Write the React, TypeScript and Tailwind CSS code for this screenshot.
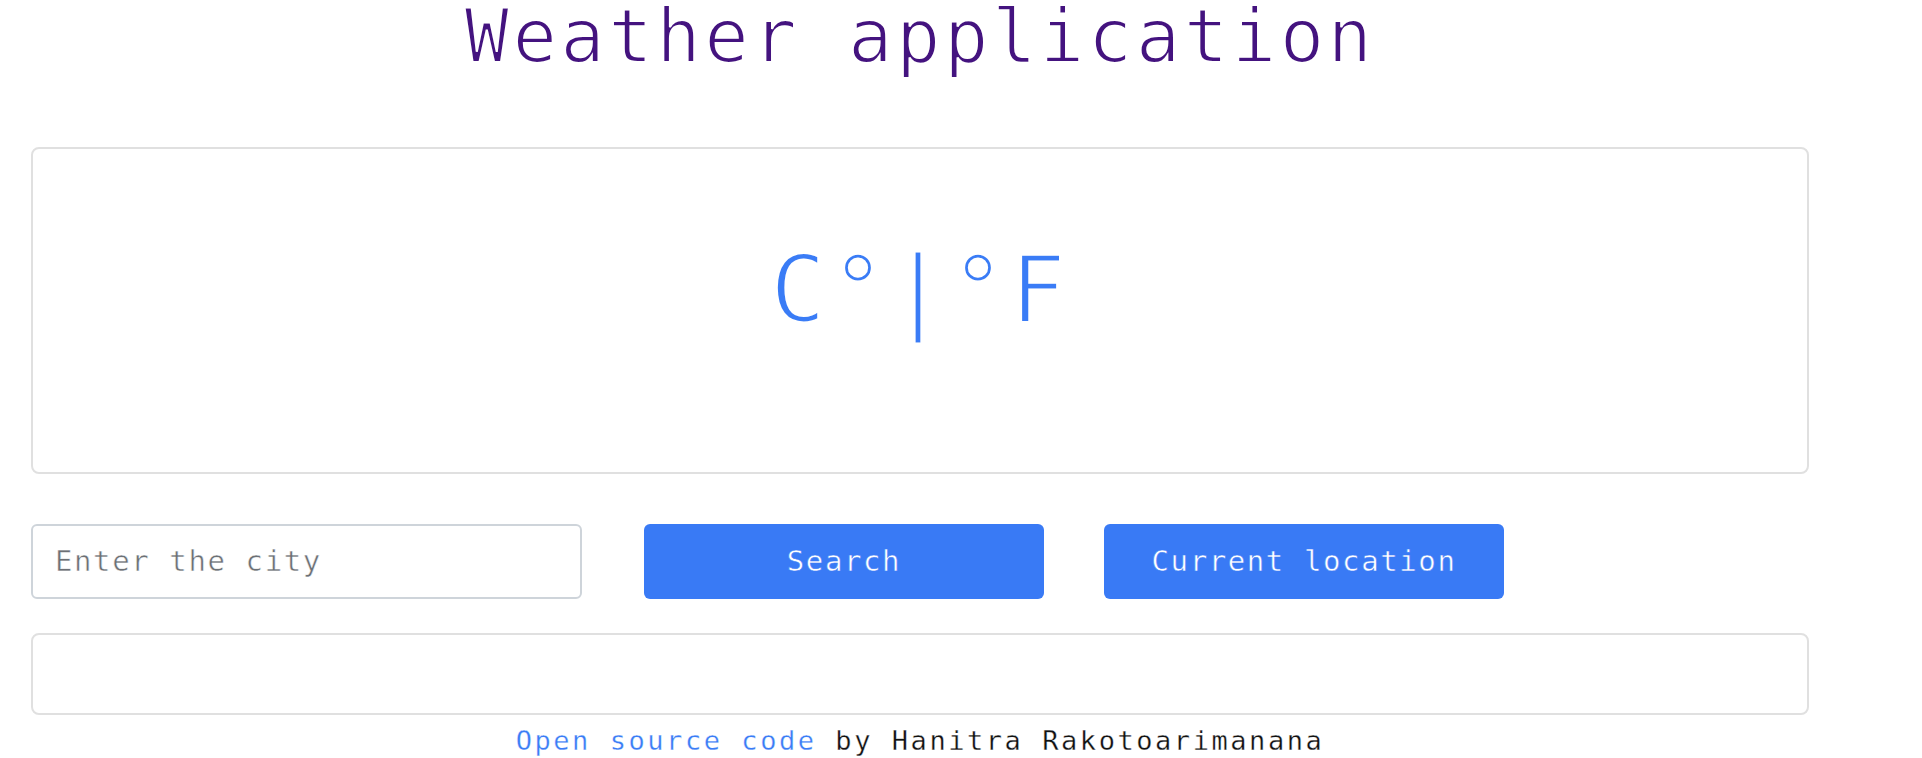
import React from "react";

const mono = "font-['DejaVu_Sans_Mono','Liberation_Mono',monospace]";

export default function App() {
  return (
    <div className={`min-h-[758px] w-[1922px] bg-white ${mono}`}>
      <div className="ml-[31px] w-[1778px]">
        <h1 className="text-center text-[74px] leading-[72px] tracking-[3.4px] text-[#44137f] font-normal [-webkit-text-stroke:2px_white]">
          Weather application
        </h1>

        <div className="mt-[75px] h-[327px] rounded-[8px] border-2 border-[#e0e0e0] pt-[95px]">
          <div className="flex justify-center text-[93px] leading-[93px] tracking-[4px] text-[#3a7cf6] [-webkit-text-stroke:3px_white]">
            <span>C°|°F</span>
          </div>
        </div>

        <div className="mt-[50px] flex h-[75px] items-stretch">
          <input
            type="text"
            placeholder="Enter the city"
            className="w-[551px] rounded-[6px] border-2 border-[#ced4da] bg-white pl-[22px] text-[29px] tracking-[1.6px] text-[#333] placeholder:text-[#6c7075] outline-none [-webkit-text-stroke:0.5px_white]"
          />
          <button className="ml-[62px] w-[400px] rounded-[6px] bg-[#397af5] text-[29px] tracking-[1.6px] text-white [-webkit-text-stroke:0.5px_#397af5]">
            Search
          </button>
          <button className="ml-[60px] w-[400px] rounded-[6px] bg-[#397af5] text-[29px] tracking-[1.6px] text-white [-webkit-text-stroke:0.5px_#397af5]">
            Current location
          </button>
        </div>

        <div className="mt-[34px] h-[82px] rounded-[8px] border-2 border-[#e0e0e0]"></div>

        <p className="mt-[6px] text-center text-[27px] tracking-[2.55px] text-[#111] [-webkit-text-stroke:0.3px_white]">
          <a href="#" className="text-[#3a7cf6]">Open source code</a> by Hanitra Rakotoarimanana
        </p>
      </div>
    </div>
  );
}
